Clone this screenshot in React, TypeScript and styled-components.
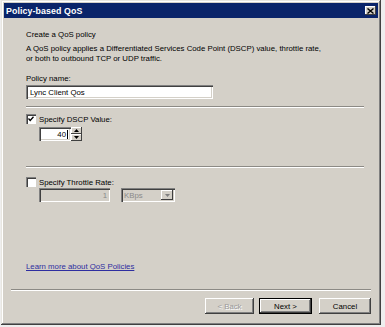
import styled, { createGlobalStyle } from "styled-components";

const GlobalStyle = createGlobalStyle`
  html, body {
    margin: 0;
    padding: 0;
    background: #eeeeee;
  }
  body {
    font-family: "Liberation Sans", Arial, sans-serif;
    font-size: 7.8px;
    color: #000;
  }
`;

const Page = styled.div`
  width: 385px;
  height: 327px;
  display: flex;
  overflow: hidden;
`;

const Window = styled.div`
  margin-left: 1px;
  width: 380px;
  height: 325px;
  box-sizing: border-box;
  padding: 3px;
  background: #d4d0c8;
  box-shadow: inset -1px -1px #404040, inset 1px 1px #e8e6e0,
    inset -2px -2px #808080, inset 2px 2px #ffffff;
  display: flex;
  flex-direction: column;
`;

const TitleBar = styled.div`
  height: 15px;
  background: #0a246a;
  display: flex;
  align-items: center;
  justify-content: space-between;
  padding: 0 2px 0 2px;
`;

const Title = styled.span`
  color: #fff;
  font-weight: bold;
  font-size: 8.8px;
  letter-spacing: 0.1px;
`;

const CloseButton = styled.div`
  width: 11px;
  height: 9px;
  background: #d4d0c8;
  box-shadow: inset -1px -1px #404040, inset 1px 1px #fff;
  display: flex;
  align-items: center;
  justify-content: center;
`;

const Body = styled.div`
  flex: 1;
  display: flex;
  flex-direction: column;
  padding: 12px 14px 0 22px;
`;

const Line = styled.div<{ $top?: number }>`
  line-height: 10px;
  margin-top: ${(p) => p.$top ?? 0}px;
  white-space: nowrap;
`;

const Description = styled.div`
  line-height: 9.5px;
  margin-top: 4px;
  white-space: nowrap;
`;

const TextBox = styled.div<{ $width: number; $disabled?: boolean }>`
  width: ${(p) => p.$width}px;
  height: 14px;
  box-sizing: border-box;
  background: ${(p) => (p.$disabled ? "#d4d0c8" : "#fff")};
  box-shadow: inset 1px 1px #808080, inset 2px 2px #404040,
    inset -1px -1px #fff, inset -2px -2px #d4d0c8;
  display: flex;
  align-items: center;
  padding: 0 4px;
  color: ${(p) => (p.$disabled ? "#8a8a8a" : "#000")};
`;

const NameBox = styled(TextBox)`
  margin-top: 1px;
`;

const Separator = styled.div<{ $top: number }>`
  margin-top: ${(p) => p.$top}px;
  height: 1px;
  background: #8c8a85;
  border-bottom: 1px solid #fff;
`;

const CheckRow = styled.label<{ $top: number }>`
  margin-top: ${(p) => p.$top}px;
  display: flex;
  align-items: center;
  gap: 3px;
  height: 10px;
`;

const CheckBox = styled.div`
  width: 10px;
  height: 10px;
  box-sizing: border-box;
  background: #fff;
  box-shadow: inset 1px 1px #808080, inset 2px 2px #404040, inset -1px -1px #fff;
  display: flex;
  align-items: center;
  justify-content: center;
`;

const Indented = styled.div<{ $top: number }>`
  margin-top: ${(p) => p.$top}px;
  margin-left: 13px;
  display: flex;
  gap: 11px;
`;

const Spinner = styled.div`
  display: flex;
  height: 14px;
`;

const SpinValue = styled(TextBox)`
  justify-content: flex-end;
  padding-right: 3px;
`;

const Caret = styled.span`
  display: inline-block;
  width: 1px;
  height: 9px;
  background: #000;
  margin-left: 1px;
`;

const SpinArrows = styled.div`
  width: 11px;
  display: flex;
  flex-direction: column;
`;

const SpinArrow = styled.div`
  flex: 1;
  background: #d4d0c8;
  box-shadow: inset -1px -1px #404040, inset 1px 1px #fff;
  display: flex;
  align-items: center;
  justify-content: center;
`;

const Select = styled(TextBox)`
  padding: 0 2px 0 3px;
  justify-content: space-between;
`;

const DropButton = styled.div`
  width: 12px;
  height: 10px;
  background: #d4d0c8;
  box-shadow: inset -1px -1px #404040, inset 1px 1px #fff;
  display: flex;
  align-items: center;
  justify-content: center;
`;

const Link = styled.a`
  margin-top: 60px;
  color: #2e2ea0;
  text-decoration: underline;
  line-height: 10px;
  align-self: flex-start;
`;

const FooterRule = styled.div`
  margin: 17px -7px 0 -15px;
  height: 1px;
  background: #8c8a85;
  border-bottom: 1px solid #fff;
`;

const Footer = styled.div`
  margin-top: 7px;
  display: flex;
  justify-content: flex-end;
  margin-right: -7px;
`;

const Button = styled.div<{ $width: number; $default?: boolean; $disabled?: boolean; $gap?: number }>`
  width: ${(p) => p.$width}px;
  height: 16px;
  margin-left: ${(p) => p.$gap ?? 0}px;
  box-sizing: border-box;
  display: flex;
  align-items: center;
  justify-content: center;
  background: #d4d0c8;
  color: ${(p) => (p.$disabled ? "#9a9a9a" : "#000")};
  text-shadow: ${(p) => (p.$disabled ? "1px 1px #fff" : "none")};
  box-shadow: ${(p) =>
    p.$default
      ? "inset 0 0 0 1px #000, inset -2px -2px #404040, inset 2px 2px #fff, inset -3px -3px #808080"
      : "inset -1px -1px #404040, inset 1px 1px #fff, inset -2px -2px #808080"};
`;

function Arrow({ up, color = "#000" }: { up?: boolean; color?: string }) {
  return (
    <svg width="5" height="3" viewBox="0 0 5 3">
      <path d={up ? "M2.5 0 L5 3 L0 3 Z" : "M0 0 L5 0 L2.5 3 Z"} fill={color} />
    </svg>
  );
}

export default function App() {
  return (
    <Page>
      <GlobalStyle />
      <Window>
        <TitleBar>
          <Title>Policy-based QoS</Title>
          <CloseButton>
            <svg width="7" height="6" viewBox="0 0 7 6">
              <path d="M0.5 0.5 L6.5 5.5 M6.5 0.5 L0.5 5.5" stroke="#000" strokeWidth="1.4" />
            </svg>
          </CloseButton>
        </TitleBar>
        <Body>
          <Line>Create a QoS policy</Line>
          <Description>
            A QoS policy applies a Differentiated Services Code Point (DSCP) value, throttle rate,
            <br />
            or both to outbound TCP or UDP traffic.
          </Description>
          <Line $top={11}>Policy name:</Line>
          <NameBox $width={187}>Lync Client Qos</NameBox>
          <Separator $top={7} />
          <CheckRow $top={6}>
            <CheckBox>
              <svg width="6" height="6" viewBox="0 0 6 6">
                <path d="M0.5 2.5 L2.2 4.5 L5.5 0.8" stroke="#000" strokeWidth="1.3" fill="none" />
              </svg>
            </CheckBox>
            Specify DSCP Value:
          </CheckRow>
          <Indented $top={3}>
            <Spinner>
              <SpinValue $width={32}>
                40
                <Caret />
              </SpinValue>
              <SpinArrows>
                <SpinArrow>
                  <Arrow up />
                </SpinArrow>
                <SpinArrow>
                  <Arrow />
                </SpinArrow>
              </SpinArrows>
            </Spinner>
          </Indented>
          <Separator $top={25} />
          <CheckRow $top={9}>
            <CheckBox />
            Specify Throttle Rate:
          </CheckRow>
          <Indented $top={1}>
            <SpinValue $width={71} $disabled>
              1
            </SpinValue>
            <Select $width={54} $disabled>
              KBps
              <DropButton>
                <Arrow color="#808080" />
              </DropButton>
            </Select>
          </Indented>
          <Link>Learn more about QoS Policies</Link>
          <FooterRule />
          <Footer>
            <Button $width={49} $disabled>
              &lt; Back
            </Button>
            <Button $width={53} $gap={5} $default>
              Next &gt;
            </Button>
            <Button $width={52} $gap={7}>
              Cancel
            </Button>
          </Footer>
        </Body>
      </Window>
    </Page>
  );
}
